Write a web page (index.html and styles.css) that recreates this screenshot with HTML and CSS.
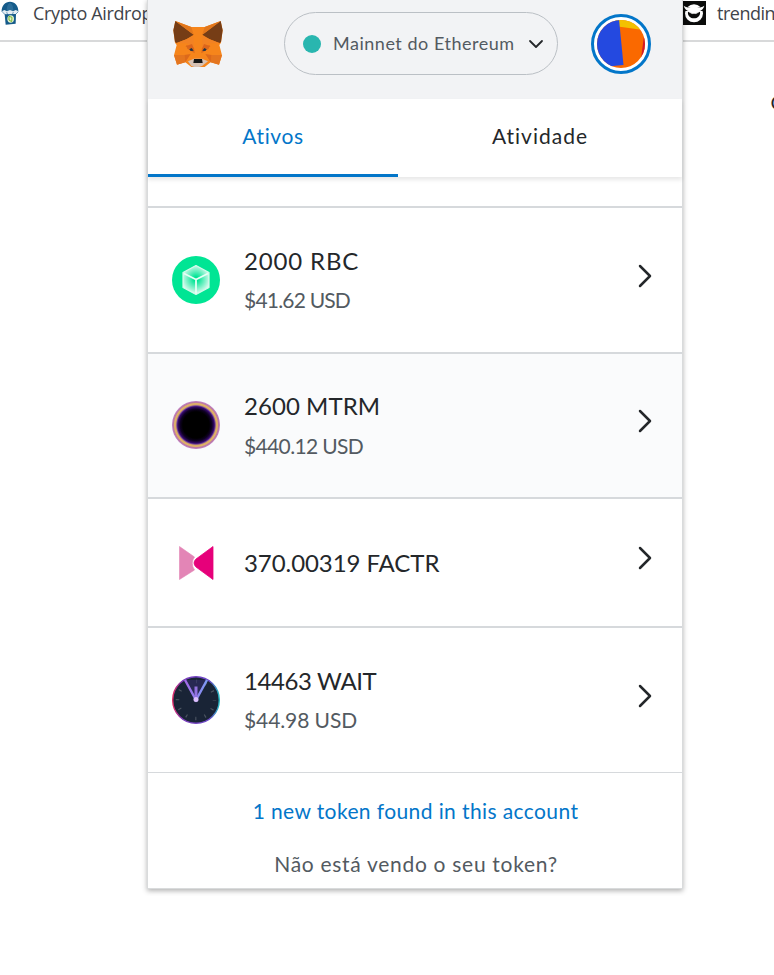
FILE: index.html
```html
<!DOCTYPE html>
<html lang="pt">
<head>
<meta charset="utf-8">
<title>Carteira</title>
<link rel="stylesheet" href="styles.css">
</head>
<body>
<div class="bookmarks">
  <div class="bookmark">
    <svg class="parachute" width="19" height="25" viewBox="0 0 57 75">
      <path d="M5 36C4 17 16 5 30 5s26 12 25 31l-8-3-8 4-9-4-9 4-8-4z" fill="#155b8a"/>
      <path d="M20 35c0-14 2-23 10-27 8 4 10 13 10 27l-9-3z" fill="#2b6d99"/>
      <path d="M7 33l6-3 8 4 9-4 9 4 8-4 7 3-1 5-12 9H19L7 38z" fill="#e4edf3"/>
      <path d="M7 36l12 11M20 36l4 11M40 36l-4 11M54 36L43 47" stroke="#5b8eb0" stroke-width="2.500"/>
      <path d="M14 43l34-1-1 29-30 3z" fill="#155b8a"/>
      <ellipse cx="32" cy="57" rx="10" ry="11" fill="#e3f1ce"/>
      <path d="M27 49l9 3-1 13-8-5z" fill="none" stroke="#79b82e" stroke-width="3"/>
    </svg>
    <span class="bm-left">Crypto Airdrop</span>
  </div>
  <div class="bookmark bookmark-right">
    <svg width="24" height="24" viewBox="0 0 72 72">
      <path d="M0 0h72v72H0z" fill="#0b0c0b"/>
      <circle cx="36" cy="37" r="27" fill="#fff"/>
      <path d="M0 12l5-3c8 10 17 13 31 13s23-3 31-13l5 3v18H0z" fill="#0b0c0b"/>
      <path d="M5 14c7 4 13 6 20 7q11-5 22 0c7-1 13-3 20-7-2 9-8 15-18 17l-13 6-13-6C13 29 7 23 5 14z" fill="#fff"/>
      <path d="M18 32l13 6h10l13-6c2 12-7 20-18 20s-20-8-18-20z" fill="#0b0c0b"/>
      <path d="M23 34l9 4M49 34l-9 4" stroke="#ddd" stroke-width="2.500"/>
    </svg>
    <span class="bm-right">trending</span>
  </div>
</div>
<div class="clipped">C</div>

<main class="popup">
  <header class="top">
    <svg class="fox" width="50" height="47" viewBox="0 0 150 141">
      <path d="M7 3l48 18h40l48-18 6 28-5 37-5 7 8 31-9 28-25-7-18 14-9 3H64l-9-3-18-14-25 7-9-28 8-31-5-7L1 31z" fill="#f6851b"/>
      <path d="M7 3l55 41-22 14-29 11-5-3-5-35zM143 3L88 44l22 14 29 11 5-3 5-35z" fill="#763d16"/>
      <path d="M7 3l48 18 7 23zM143 3L95 21l-7 23z" fill="#e2761b"/>
      <path d="M3 105h31l3 22-25 7zM147 105h-31l-3 22 25 7z" fill="#e4751f"/>
      <path d="M34 105l19-3-16 25zM116 105l-19-3 16 25zM39 76l24 7 2 17-22-14zM111 76l-24 7-2 17 22-14z" fill="#dc691b"/>
      <path d="M11 69l29-11 21-10 2 35-23-13zM139 69l-29-11-21-10-2 35 23-13z" fill="#f28223"/>
      <path d="M37 79l20-7 6 15zM113 79l-20-7-6 15z" fill="#dc651b"/>
      <path d="M49 88l7-4 6 8-9 1zM101 88l-7-4-6 8 9 1z" fill="#233447"/>
      <path d="M45 124l18-8h24l18 8-18 14-9 3H64l-9-3z" fill="#d7c1b3"/>
      <path d="M63 117h24l2 12H61z" fill="#161616"/>
    </svg>
    <div class="network">
      <span class="dot"></span>
      <span class="network-name">Mainnet do Ethereum</span>
      <svg class="down" width="16" height="10" viewBox="0 0 16 10"><path d="M2 2l6 6 6-6" fill="none" stroke="#24272a" stroke-width="1.800" stroke-linecap="round" stroke-linejoin="round"/></svg>
    </div>
    <svg class="account" width="60" height="60" viewBox="0 0 60 60">
      <defs><clipPath id="face"><circle cx="30" cy="30" r="24"/></clipPath></defs>
      <circle cx="30" cy="30" r="28.500" fill="#fff" stroke="#0376c9" stroke-width="3"/>
      <g clip-path="url(#face)">
        <path d="M0 0h60v60H0z" fill="#fa6900"/>
        <path d="M20 0h40v17L27 12.500z" fill="#f3c100"/>
        <path d="M53 22h7v30H49z" fill="#d3182a"/>
        <path d="M0 0h27.500l5 51L0 54z" fill="#2449e0"/>
      </g>
    </svg>
  </header>

  <nav class="tabs">
    <div class="tab active"><span class="t-ativos">Ativos</span></div>
    <div class="tab"><span class="t-atividade">Atividade</span></div>
  </nav>

  <section class="assets">
    <div class="asset">
      <svg class="coin" width="48" height="48" viewBox="0 0 48 48">
        <defs>
          <radialGradient id="cube" gradientUnits="userSpaceOnUse" cx="24" cy="23" r="15"><stop offset=".15" stop-color="#fff" stop-opacity="0"/><stop offset="1" stop-color="#fff" stop-opacity=".9"/></radialGradient>
        </defs>
        <circle cx="24" cy="24" r="24" fill="#00e594"/>
        <path d="M24 9.500l13 7v15l-13 7-13-7v-15z" fill="url(#cube)" stroke="#d5faec" stroke-width="1.200" stroke-linejoin="round"/>
        <path d="M12 17.500l12 6 12-6M24 23.500v14" fill="none" stroke="#e6fff5" stroke-width="1.800"/>
      </svg>
      <div class="info"><div class="amount a1">2000 RBC</div><div class="fiat f1">$41.62 USD</div></div>
      <svg class="next" width="16" height="26" viewBox="0 0 16 26"><path d="M3 3l10 10L3 23" fill="none" stroke="#24272a" stroke-width="2.500" stroke-linecap="round" stroke-linejoin="round"/></svg>
    </div>
    <div class="asset hovered">
      <svg class="coin" width="48" height="48" viewBox="0 0 48 48">
        <defs><radialGradient id="ring"><stop offset="0.550" stop-color="#000"/><stop offset=".66" stop-color="#0e0122"/><stop offset=".76" stop-color="#35086c"/><stop offset=".8" stop-color="#70449a"/><stop offset=".84" stop-color="#d6a567"/><stop offset=".89" stop-color="#e1b864"/><stop offset=".94" stop-color="#bb78a4"/><stop offset="1" stop-color="#c184c8"/></radialGradient></defs>
        <circle cx="24" cy="24" r="24" fill="url(#ring)"/>
      </svg>
      <div class="info"><div class="amount a2">2600 MTRM</div><div class="fiat f2">$440.12 USD</div></div>
      <svg class="next" width="16" height="26" viewBox="0 0 16 26"><path d="M3 3l10 10L3 23" fill="none" stroke="#24272a" stroke-width="2.500" stroke-linecap="round" stroke-linejoin="round"/></svg>
    </div>
    <div class="asset single">
      <svg class="coin" width="48" height="48" viewBox="0 0 48 48">
        <path d="M7.500 7.500L22.500 18Q18 24 22.500 31L7.500 40.500z" fill="#e385b6" stroke="#e385b6" stroke-width=".6"/>
        <path d="M41 7.500L24 20q-4 4 0 8l17 12.500z" fill="#e6007a" stroke="#e6007a" stroke-width=".8" stroke-linejoin="round"/>
      </svg>
      <div class="info"><div class="amount a3">370.00319 FACTR</div></div>
      <svg class="next" width="16" height="26" viewBox="0 0 16 26"><path d="M3 3l10 10L3 23" fill="none" stroke="#24272a" stroke-width="2.500" stroke-linecap="round" stroke-linejoin="round"/></svg>
    </div>
    <div class="asset last">
      <svg class="coin" width="48" height="48" viewBox="0 0 48 48">
        <defs>
          <linearGradient id="rim"><stop stop-color="#e02b65"/><stop offset=".2" stop-color="#7c3cba"/><stop offset=".8" stop-color="#6b4bca"/><stop offset="1" stop-color="#22b9bf"/></linearGradient>
          <linearGradient id="hands"><stop stop-color="#a268e5"/><stop offset="1" stop-color="#7c9bf5"/></linearGradient>
        </defs>
        <circle cx="24" cy="24" r="23.300" fill="#192436" stroke="url(#rim)" stroke-width="1.400"/>
        <circle cx="24" cy="24" r="18.500" fill="none" stroke="#4a5360" stroke-width="3.500" stroke-dasharray="1.200 8.486" stroke-dashoffset=".6"/>
        <path d="M13 4l11 20L35 4" fill="#302b68" fill-opacity=".6" stroke="url(#hands)" stroke-width="2.400"/>
        <path d="M22.500 10.500h3V23h-3z" fill="#9271df"/>
        <circle cx="24" cy="23.500" r="2.500" fill="#ddbfff"/>
      </svg>
      <div class="info"><div class="amount a4">14463 WAIT</div><div class="fiat f4">$44.98 USD</div></div>
      <svg class="next" width="16" height="26" viewBox="0 0 16 26"><path d="M3 3l10 10L3 23" fill="none" stroke="#24272a" stroke-width="2.500" stroke-linecap="round" stroke-linejoin="round"/></svg>
    </div>
  </section>

  <footer class="more">
    <div class="found"><span>1 new token found in this account</span></div>
    <div class="missing"><span>Não está vendo o seu token?</span></div>
  </footer>
</main>
</body>
</html>
```
FILE: styles.css
```css
* { box-sizing: border-box; }
html, body { margin: 0; height: 100%; overflow: hidden; }
body { position: relative; background: #fff; color: #24272a; font-family: Lato, "Liberation Sans", sans-serif; }
svg { display: block; flex: none; }

.bookmarks { display: flex; height: 42px; border-bottom: 2px solid #d8d9da; font: 18px/26px "Open Sans", "Noto Sans", sans-serif; color: #3f444a; white-space: nowrap; }
.bookmark { display: flex; align-items: flex-start; width: 682px; flex: none; }
.bookmark-right { width: 110px; padding-top: 1px; }
.parachute { margin-right: 14px; }
.bm-left { letter-spacing: -0.35px; }
.bm-right { margin: -1px 0 0 11px; letter-spacing: -0.5px; }
.clipped { margin: 48px 0 0 770.5px; font: 20px/25px Lato, sans-serif; }

.popup { position: absolute; left: 148px; top: 0; width: 534px; height: 888px; background: #fff; box-shadow: 0 0 0 1px #d9dbdc, 0 2px 5px 1px rgba(0,0,0,.3); clip-path: inset(0 -8px -8px -8px); }
.top { display: flex; height: 99px; background: #f2f3f5; }
.fox { margin: 20px 0 0 25px; }
.network { display: flex; align-items: center; width: 274px; height: 63px; margin: 12px 0 0 61px; padding-left: 18px; border: 1px solid #bbc0c5; border-radius: 32px; color: #535a61; font-size: 18px; white-space: nowrap; }
.dot { width: 18px; height: 18px; margin-right: 12px; border-radius: 50%; background: #29b6af; }
.network-name { width: 182px; padding-bottom: 2px; letter-spacing: .52px; }
.down { margin-left: 13px; }
.account { margin: 14px 0 0 33px; }

.tabs { display: flex; height: 78px; box-shadow: 0 3px 4px rgba(0,0,0,.09); font-size: 21px; line-height: 74px; text-align: center; }
.tab { width: 250px; height: 78px; }
.tab + .tab { width: 284px; }
.active { color: #0376c9; border-bottom: 3px solid #0376c9; }
.t-ativos { letter-spacing: .6px; }
.t-atividade { letter-spacing: 1px; }

.assets { margin-top: 29px; border-top: 2px solid #d6d9dc; }
.asset { display: flex; height: 146px; padding: 0 29px 0 24px; border-bottom: 2px solid #d6d9dc; }
.coin { margin-top: 48px; }
.hovered { height: 145px; background: #fafbfc; }
.hovered .coin { margin-top: 47px; }
.single { height: 129px; }
.single .coin { margin-top: 40px; }
.last { height: 145px; border-bottom-width: 1px; }
.info { flex: 1; padding: 37px 0 0 24px; white-space: nowrap; }
.hovered .info { padding-top: 36px; }
.single .info { padding-top: 48px; }
.amount { font-size: 24px; line-height: 32px; }
.fiat { margin-top: 8px; font-size: 21px; line-height: 30px; color: #535a61; }
.hovered .fiat { margin-top: 9px; }
.a1 { letter-spacing: .85px; }
.a2 { letter-spacing: .05px; }
.a3 { letter-spacing: -.07px; }
.a4 { letter-spacing: -.4px; }
.f1 { letter-spacing: -.8px; }
.f2 { letter-spacing: -.64px; }
.f4 { letter-spacing: -.1px; }
.next { margin-top: 55px; }
.hovered .next { margin-top: 54px; }
.single .next { margin-top: 46px; }

.more { text-align: center; font-size: 21px; line-height: 30px; white-space: nowrap; }
.found { margin-top: 23px; padding-left: 1px; color: #0376c9; letter-spacing: .4px; }
.missing { margin-top: 23px; padding-left: 2px; color: #535a61; letter-spacing: .7px; }
```
